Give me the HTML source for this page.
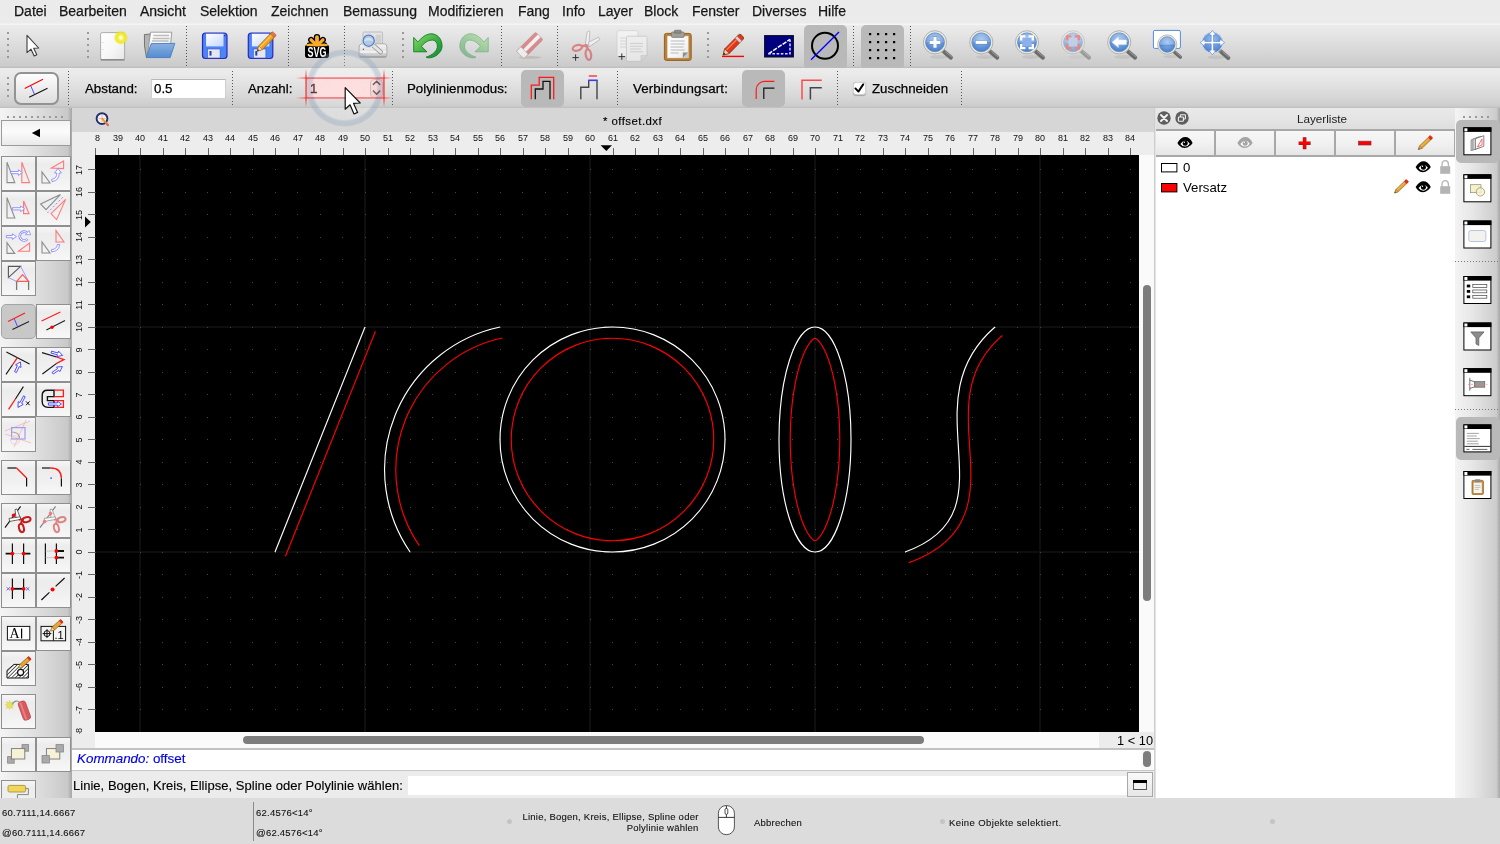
<!DOCTYPE html>
<html lang="de"><head><meta charset="utf-8"><title>offset.dxf</title>
<style>
*{box-sizing:border-box;margin:0;padding:0}
html,body{width:1500px;height:844px;overflow:hidden;background:#ececec;font-family:"Liberation Sans",sans-serif;color:#000}
body{position:relative}
div,span,svg{position:absolute}
span,svg{will-change:transform}
svg{overflow:visible}
#menubar{left:0;top:0;width:1500px;height:23px;background:#ebebeb;font-size:14px;line-height:22.4px;white-space:nowrap;color:#161616;-webkit-text-stroke:.25px #161616}
#menubar span{top:0}
#tb1{left:0;top:23px;width:1500px;height:45px;background:linear-gradient(#ececec 0,#f7f7f7 1.3px,#eaeaea 2.6px,#e6e6e6 10px,#d5d5d5 31px,#cbcbcb 43px,#bebebe 44.6px)}
#tb2{left:0;top:68px;width:1500px;height:40px;background:linear-gradient(#ededed 0,#e9e9e9 7px,#d9d9d9 27px,#cdcdcd 37.5px,#c1c1c1 39.6px);font-size:13.3px;white-space:nowrap;-webkit-text-stroke:.25px #000}
.sep{width:1px;background:repeating-linear-gradient(#555 0,#555 1px,transparent 1px,transparent 3px)}
.hdl{width:2px;background:repeating-linear-gradient(#999 0,#999 2px,transparent 2px,transparent 6px)}
.hdlh{height:2px;background:repeating-linear-gradient(90deg,#999 0,#999 2px,transparent 2px,transparent 6px)}
.pressed{background:#b9b9b9;border-radius:5px}
#left{left:0;top:108px;width:72px;height:691px;background:linear-gradient(90deg,#f4f4f4,#e4e4e4 40%,#c9c9c9 94%,#b0b0b0 98%,#a8a8a8);overflow:hidden}
.tb{width:35px;height:35px;border:1px solid #8f8f8f;background:linear-gradient(#f6f6f6,#ececec 22%,#f0f0f0 60%,#f7f7f7)}
.tb.on{background:#c8c8c8;border:1px solid #a5a5a5;border-radius:5px}
.tb svg{left:-1px;top:-1px;width:35px;height:35px}
#tabbar{left:72px;top:108px;width:1082px;height:24px;background:#d6d6d6;font-size:11.4px;letter-spacing:.46px;-webkit-text-stroke:.15px #000}
#hruler{left:95px;top:132px;width:1044px;height:23px;background:#ededed;overflow:hidden;font-size:9px}
#hrext{left:1139px;top:132px;width:15px;height:23px;background:#ededed}
#hruler span{top:1px;width:30px;margin-left:-15px;text-align:center;line-height:10px;color:#111}
#hruler i{position:absolute;top:16px;width:1px;height:7px;background:#666}
#vruler{left:72px;top:155px;width:23px;height:578.5px;background:#ededed;overflow:hidden;font-size:9px}
#vruler span{left:-8.4px;width:30px;height:10px;margin-top:-5px;text-align:center;line-height:10px;transform:rotate(-90deg);color:#111}
#vruler i{position:absolute;left:16px;width:7px;height:1px;background:#666}
#corner{left:72px;top:132px;width:23px;height:23px;background:#ededed}
#canvas{left:95px;top:155px;width:1044px;height:577px;background:#000;overflow:hidden}
#vscroll{left:1139px;top:155px;width:15px;height:577px;background:#fafafa}
#hscroll{left:95px;top:732px;width:1004px;height:16px;background:#fafafa}
#zoomlab{left:1099px;top:732px;width:55px;height:14.5px;background:#ececec;font-size:12.8px;line-height:17px;text-align:right;padding-right:1px}
#hist{left:72px;top:748px;width:1082px;height:23px;background:#fff;border-top:2px solid #c2c2c2;border-bottom:1px solid #c8c8c8;font-size:13.4px;color:#0000e0;line-height:17px;-webkit-text-stroke:.15px #0000e0}
#cmd{left:72px;top:771px;width:1082px;height:27px;background:#ececec;font-size:13px;letter-spacing:.03px;-webkit-text-stroke:.15px #000}
#status{left:0;top:798px;width:1500px;height:46px;background:#dcdcdc;font-size:9.5px;letter-spacing:.24px;white-space:nowrap;color:#111;-webkit-text-stroke:.1px #111}
#layers{left:1154px;top:108px;width:301px;height:691px;background:#fff}
#ltitle{left:0;top:0;width:301px;height:22px;background:linear-gradient(#eaeaea,#dedede);font-size:11.7px;text-align:center;line-height:22px;color:#222}
.lb{top:21px;width:61px;height:28px;border:2px solid #a8a8a8;border-left-width:1px;border-right-width:1px;background:linear-gradient(#f7f7f7,#f1f1f1 50%,#e6e6e6)}
#right{left:1454.5px;top:108px;width:45.5px;height:691px;background:linear-gradient(90deg,#f4f4f4,#e6e6e6 40%,#cccccc 92%,#b4b4b4 97%,#a8a8a8)}
.dot{width:5px;height:5px;border-radius:3px;background:#c4c4c4}
</style></head><body>
<div id="menubar"><span style="left:14.4px">Datei</span><span style="left:59.4px">Bearbeiten</span><span style="left:140.4px">Ansicht</span><span style="left:200.4px">Selektion</span><span style="left:271.4px">Zeichnen</span><span style="left:342.6px">Bemassung</span><span style="left:428.4px">Modifizieren</span><span style="left:518px">Fang</span><span style="left:561.6px">Info</span><span style="left:597.6px">Layer</span><span style="left:644.4px">Block</span><span style="left:691.8px">Fenster</span><span style="left:751.5px">Diverses</span><span style="left:818.4px">Hilfe</span></div>
<div id="tb1"></div>
<div class="hdl" style="left:7px;top:32px;height:26px"></div><div class="hdl" style="left:87px;top:32px;height:26px"></div><div class="hdl" style="left:402px;top:32px;height:26px"></div><div class="hdl" style="left:707px;top:32px;height:26px"></div><div class="sep" style="left:186px;top:26px;height:40px"></div><div class="sep" style="left:288px;top:26px;height:40px"></div><div class="sep" style="left:344px;top:26px;height:40px"></div><div class="sep" style="left:501px;top:26px;height:40px"></div><div class="sep" style="left:557px;top:26px;height:40px"></div><div class="sep" style="left:853px;top:26px;height:40px"></div><div class="sep" style="left:910px;top:26px;height:40px"></div><div class="pressed" style="left:804px;top:25px;width:43px;height:43px;border-radius:5px 5px 3px 3px"></div><div class="pressed" style="left:861px;top:25px;width:43px;height:43px;border-radius:5px 5px 3px 3px"></div>
<svg style="left:0;top:0;width:1500px;height:110px" viewBox="0 0 1500 110"><defs>
<radialGradient id="lens" cx=".5" cy=".35" r=".75"><stop offset="0" stop-color="#9cc0ee"/><stop offset=".6" stop-color="#5f92d6"/><stop offset="1" stop-color="#3f72be"/></radialGradient>
<radialGradient id="glow"><stop offset="0" stop-color="#ffffff"/><stop offset=".14" stop-color="#fffef0"/><stop offset=".36" stop-color="#f6f050"/><stop offset=".7" stop-color="#f0e81c" stop-opacity=".95"/><stop offset="1" stop-color="#ece400" stop-opacity="0"/></radialGradient>
<linearGradient id="paper" x1="0" y1="0" x2="1" y2="1"><stop offset="0" stop-color="#ffffff"/><stop offset=".6" stop-color="#f6f6f6"/><stop offset="1" stop-color="#e6e6e6"/></linearGradient>
<linearGradient id="fold" x1="0" y1="0" x2="0" y2="1"><stop offset="0" stop-color="#8ab2e2"/><stop offset="1" stop-color="#548cd0"/></linearGradient>
<linearGradient id="grn" x1="0" y1="0" x2="1" y2="1"><stop offset="0" stop-color="#8fdc6a"/><stop offset=".5" stop-color="#3fb040"/><stop offset="1" stop-color="#128a34"/></linearGradient>
<linearGradient id="lab" x1="0" y1="0" x2="1" y2="1"><stop offset="0" stop-color="#ffffff"/><stop offset="1" stop-color="#c4d6ff"/></linearGradient>
<linearGradient id="prn" x1="0" y1="0" x2="0" y2="1"><stop offset="0" stop-color="#f4f4f4"/><stop offset=".55" stop-color="#e2e2e2"/><stop offset="1" stop-color="#bababa"/></linearGradient>
<linearGradient id="btn" x1="0" y1="0" x2="0" y2="1"><stop offset="0" stop-color="#fbfbfb"/><stop offset=".5" stop-color="#ededed"/><stop offset="1" stop-color="#dcdcdc"/></linearGradient>
</defs><path d="M27,35.3 L27,52.6 L31,49.2 L34.2,56 L36.8,54.8 L33.7,48.3 L38.7,48 Z" fill="#fff" stroke="#3c3c3c" stroke-width="1.1" stroke-linejoin="round"/><rect x="100.6" y="32.6" width="24" height="27" rx="1.6" fill="url(#paper)" stroke="#a4a4a4" stroke-width=".9"/><path d="M100.6,59.9 h24" stroke="#7c7c7c" stroke-width="1.2"/><circle cx="103" cy="42.5" r=".5" fill="#bbb"/><circle cx="103" cy="49.5" r=".5" fill="#bbb"/><circle cx="120.9" cy="37.7" r="7.2" fill="url(#glow)"/><path d="M144.4,34.6 L150.4,34 L150.4,56 L146.4,57 Q143.6,46 144.4,34.6 Z" fill="#b4b4b4" stroke="#6a6a6a" stroke-width=".9" stroke-linejoin="round"/><path d="M150.6,32.2 L171.8,32.2 L170.6,44 L147.6,54 Z" fill="url(#paper)" stroke="#8a8a8a" stroke-width=".8" stroke-linejoin="round"/><path d="M153.4,35.6 H169 M152.6,38.4 H169.6 M152,41 H168.6" stroke="#bcbcbc" stroke-width="1.5"/><path d="M151.2,43.6 L174.8,43.4 L170.2,57.6 L146.2,57.6 Z" fill="url(#fold)" stroke="#4a7cc0" stroke-width=".9" stroke-linejoin="round"/><rect x="202.5" y="33" width="24.5" height="25.5" rx="3" fill="#4a84f6" stroke="#2a2ab6" stroke-width="1.2"/><rect x="206.1" y="33.8" width="17.4" height="12.6" fill="url(#lab)"/><rect x="207.5" y="49" width="12.6" height="9" fill="#e4e6f2" stroke="#3a52c8" stroke-width=".6"/><rect x="209.5" y="51" width="2" height="4.6" fill="#2a3cc4"/><rect x="224.1" y="35" width="1.2" height="1.2" fill="#2a2ab6"/><rect x="248.3" y="33" width="24.5" height="25.5" rx="3" fill="#4a84f6" stroke="#2a2ab6" stroke-width="1.2"/><rect x="251.9" y="33.8" width="17.4" height="12.6" fill="url(#lab)"/><rect x="253.3" y="49" width="12.6" height="9" fill="#e4e6f2" stroke="#3a52c8" stroke-width=".6"/><rect x="255.3" y="51" width="2" height="4.6" fill="#2a3cc4"/><rect x="269.90000000000003" y="35" width="1.2" height="1.2" fill="#2a2ab6"/><g transform="translate(257.2,51.2) rotate(-46)"><path d="M0,0 L5,-2.6 L24,-2.6 L24,2.6 L5,2.6 Z" fill="#f2a21e" stroke="#b0640a" stroke-width=".8" stroke-linejoin="round"/><path d="M5,-.8 L22,-.8" stroke="#ffd070" stroke-width="1.2"/><path d="M0,0 L5,-2.6 L5,2.6 Z" fill="#f4dcb0" stroke="#b0640a" stroke-width=".6"/><path d="M0,0 L2,-1 L2,1Z" fill="#333"/><rect x="21.5" y="-2.6" width="3.4" height="5.2" rx="1" fill="#e87060" stroke="#b0640a" stroke-width=".6"/></g><g><path d="M317,45.6 L317.0,37.2" stroke="#000" stroke-width="6.4" stroke-linecap="round"/><path d="M317,45.6 L311.1,39.9" stroke="#000" stroke-width="6.0" stroke-linecap="round"/><path d="M317,45.6 L322.9,39.9" stroke="#000" stroke-width="6.0" stroke-linecap="round"/><path d="M317,45.6 L309.4,44.8" stroke="#000" stroke-width="5.2" stroke-linecap="round"/><path d="M317,45.6 L324.6,44.8" stroke="#000" stroke-width="5.2" stroke-linecap="round"/><rect x="305" y="44.6" width="24" height="13.4" rx="2.8" fill="#000"/><path d="M317,45.6 L317.0,37.2" stroke="#fbab2c" stroke-width="3.8" stroke-linecap="round"/><path d="M317,45.6 L311.1,39.9" stroke="#fbab2c" stroke-width="3.4" stroke-linecap="round"/><path d="M317,45.6 L322.9,39.9" stroke="#fbab2c" stroke-width="3.4" stroke-linecap="round"/><path d="M317,45.6 L309.4,44.8" stroke="#fbab2c" stroke-width="2.6" stroke-linecap="round"/><path d="M317,45.6 L324.6,44.8" stroke="#fbab2c" stroke-width="2.6" stroke-linecap="round"/><path d="M307.4,45.2 H326.6" stroke="#fbab2c" stroke-width="2.2" stroke-linecap="round"/><rect x="306" y="46.4" width="22" height="11" rx="1.6" fill="#000"/><text x="317" y="57.2" font-family="Liberation Sans,sans-serif" font-weight="bold" font-size="14" fill="#fff" text-anchor="middle" textLength="19" lengthAdjust="spacingAndGlyphs">SVG</text></g><g><rect x="363" y="32" width="19.4" height="13" rx="1" fill="#e6e6e6" stroke="#b4b4b4" stroke-width=".9"/><rect x="375.6" y="34.6" width="5.4" height="8.8" fill="#d0d0d0"/><path d="M361.6,43.8 L384.4,43.8 Q386.9,44.4 386.9,47 L386.9,55.2 Q386.9,57.3 384.8,57.3 L361.2,57.3 Q359.1,57.3 359.1,55.2 L359.1,47 Q359.1,44.4 361.6,43.8 Z" fill="url(#prn)" stroke="#a6a6a6" stroke-width=".9"/><path d="M359.6,52 H386.4" stroke="#fff" stroke-width="1.1"/><path d="M360,56.8 H386" stroke="#9c9c9c" stroke-width="1"/><circle cx="363.4" cy="49.2" r=".7" fill="#555"/><path d="M372.6,44.8 L380.6,52" stroke="#9a9a9a" stroke-width="4.6" stroke-linecap="round"/><path d="M372.6,44.8 L380.6,52" stroke="#e6e6e6" stroke-width="3" stroke-linecap="round"/><circle cx="368.7" cy="40.7" r="6.9" fill="#f4f4f4" stroke="#c8c8c8" stroke-width=".6"/><circle cx="368.7" cy="40.7" r="5.6" fill="#b4c8e4" stroke="#4a80c8" stroke-width="1.3"/><path d="M364,41.6 A4.8,4.8 0 0 1 373.4,41.6 Q368.7,39.4 364,41.6Z" fill="#fff" opacity=".45"/></g><path d="M413.7,37.4 L413.7,51.8 L426.9,51.8 L421.5,46.4 C424,43 428,40 432.6,40.1 C435.5,40.3 437.2,42.5 437.4,46 C437.6,50.5 433,55 426,57.2 C429,58.5 433,57.8 437,55 C441,52 442.6,48 441.9,44 C441,38 437,34.2 432,33.8 C426,33.5 421.5,38 417.9,41.9 Z" fill="url(#grn)" stroke="#0d7a2c" stroke-width=".9" stroke-linejoin="round"/><g transform="translate(901.9,0) scale(-1,1)" opacity=".42"><path d="M413.7,37.4 L413.7,51.8 L426.9,51.8 L421.5,46.4 C424,43 428,40 432.6,40.1 C435.5,40.3 437.2,42.5 437.4,46 C437.6,50.5 433,55 426,57.2 C429,58.5 433,57.8 437,55 C441,52 442.6,48 441.9,44 C441,38 437,34.2 432,33.8 C426,33.5 421.5,38 417.9,41.9 Z" fill="url(#grn)" stroke="#0d7a2c" stroke-width=".9" stroke-linejoin="round"/></g><g opacity=".55"><ellipse cx="530" cy="57.4" rx="11.5" ry="1.4" fill="#b8a8a8"/><g transform="translate(529.9,45.2) rotate(-45)"><rect x="-13.8" y="-5.2" width="27" height="10.4" rx="1.6" fill="#d6484c" stroke="#9a3a3a" stroke-width=".7"/><rect x="-13.8" y="-1.8" width="27" height="3.6" fill="#fff"/><rect x="-13.8" y="-5.2" width="6.2" height="10.4" rx="1.2" fill="#fff" stroke="#a0a0a0" stroke-width=".7"/></g></g><g opacity=".6"><path d="M585.2,45.6 L587.2,31.8 Q588.6,30.6 589.8,31.4 L588.9,46.4 Z" fill="#fafafa" stroke="#8a8a8a" stroke-width=".7"/><path d="M588.4,42.4 L598.6,37.2 L599.7,39.6 L589.2,46.8 Z" fill="#fafafa" stroke="#8a8a8a" stroke-width=".7"/><ellipse cx="577.3" cy="47.9" rx="4.7" ry="2.7" transform="rotate(-17 577.3 47.9)" fill="none" stroke="#d8484c" stroke-width="2.2"/><ellipse cx="588.4" cy="54.6" rx="2.7" ry="5.3" transform="rotate(-9 588.4 54.6)" fill="none" stroke="#d8484c" stroke-width="2.2"/><path d="M581.6,46.2 L586.6,45.4 L587.6,49.6" stroke="#d8484c" stroke-width="2.6" fill="none" stroke-linejoin="round"/></g><path d="M572.4,57.6 h6.4 M575.6,54.4 v6.4" stroke="#333" stroke-width="1"/><g opacity=".6"><rect x="617" y="30.6" width="21" height="26" rx="1.4" fill="#fafafa" stroke="#c4c4c4" stroke-width=".8"/><path d="M620,38 h8 M620,41 h8 M620,44 h6 M620,47 h6" stroke="#d0d0d0" stroke-width="1"/><path d="M626.4,37.6 Q626.4,36.2 627.8,36.2 L645.6,36.2 Q647,36.2 647,37.6 L647,55.4 L641,61.4 L627.8,61.4 Q626.4,61.4 626.4,60 Z" fill="#f6f6f6" stroke="#b4b4b4" stroke-width=".8"/><path d="M647,55.4 L641,55.4 L641,61.4 Z" fill="#d8d8d8" stroke="#b4b4b4" stroke-width=".6"/><path d="M630,43.4 h13 M630,46.2 h13 M630,49 h11 M630,51.8 h13" stroke="#c2c2c2" stroke-width="1"/></g><path d="M618.6,56.6 h6.4 M621.8,53.4 v6.4" stroke="#333" stroke-width="1"/><g><rect x="664.4" y="33.4" width="26.8" height="27" rx="2" fill="#bb7f36" stroke="#96601e" stroke-width="1"/><rect x="667.2" y="36" width="21.2" height="22" fill="url(#paper)" stroke="#c8c0b0" stroke-width=".5"/><path d="M670.6,41 h14 M670.6,44 h14 M670.6,47 h13 M670.6,50 h14 M670.6,53 h8" stroke="#b8b8b8" stroke-width="1"/><path d="M688.4,52.6 L682.8,52.6 L682.8,58 Z" fill="#909090"/><path d="M688.4,52.6 L688.4,58 L682.8,58 Z" fill="#c8c8c8"/><rect x="671.4" y="32" width="12.8" height="5.4" rx="1.2" fill="#a0a098" stroke="#74746c" stroke-width=".7"/><rect x="674.4" y="30.2" width="6.8" height="3" rx=".8" fill="#8c8c84" stroke="#686860" stroke-width=".6"/></g><path d="M722,56.4 H744" stroke="#ff0000" stroke-width="1.4"/><g transform="translate(723.2,55) rotate(-45.5)"><path d="M0,0 L5.4,-3.2 L25,-3.2 Q27,-3.2 27,-1.2 L27,1.2 Q27,3.2 25,3.2 L5.4,3.2 Z" fill="#e23420" stroke="#7a3a10" stroke-width=".8" stroke-linejoin="round"/><path d="M6,-1.2 L20,-1.2" stroke="#ff7a5a" stroke-width="1.4"/><path d="M0,0 L5.4,-3.2 L5.4,3.2 Z" fill="#f0d4a4" stroke="#7a3a10" stroke-width=".6"/><path d="M0,0 L2.2,-1.3 L2.2,1.3Z" fill="#222"/><rect x="20.4" y="-3.2" width="2.6" height="6.4" fill="#d8d0d0"/></g><rect x="764.6" y="35.6" width="28.8" height="21.4" fill="#00007e" stroke="#0a0a20" stroke-width="1"/><path d="M768.4,53.8 L790,39.4" stroke="#fff" stroke-width="1.5" stroke-dasharray="4.5,1.2"/><path d="M790,39.4 L790,53.8 L768.4,53.8" stroke="#d8d8ff" stroke-width="1.5" stroke-dasharray="2.6,1.6" fill="none"/><circle cx="825" cy="45.8" r="13" fill="none" stroke="#000" stroke-width="2"/><path d="M811,59.8 L839,32" stroke="#0000ff" stroke-width="1.3"/><rect x="869" y="33" width="2.2" height="2.2" fill="#000"/><rect x="869" y="41" width="2.2" height="2.2" fill="#000"/><rect x="869" y="49" width="2.2" height="2.2" fill="#000"/><rect x="869" y="57" width="2.2" height="2.2" fill="#000"/><rect x="877" y="33" width="2.2" height="2.2" fill="#000"/><rect x="877" y="41" width="2.2" height="2.2" fill="#000"/><rect x="877" y="49" width="2.2" height="2.2" fill="#000"/><rect x="877" y="57" width="2.2" height="2.2" fill="#000"/><rect x="885" y="33" width="2.2" height="2.2" fill="#000"/><rect x="885" y="41" width="2.2" height="2.2" fill="#000"/><rect x="885" y="49" width="2.2" height="2.2" fill="#000"/><rect x="885" y="57" width="2.2" height="2.2" fill="#000"/><rect x="893" y="33" width="2.2" height="2.2" fill="#000"/><rect x="893" y="41" width="2.2" height="2.2" fill="#000"/><rect x="893" y="49" width="2.2" height="2.2" fill="#000"/><rect x="893" y="57" width="2.2" height="2.2" fill="#000"/><g opacity="1.0"><ellipse cx="939" cy="56.9" rx="9" ry="2" fill="#000" opacity=".07"/><path d="M942.4,50.3 L950.8,57.5" stroke="#8e8e8a" stroke-width="4.4" stroke-linecap="round"/><path d="M944.6,52.199999999999996 L950.8,57.5" stroke="#6a6a6a" stroke-width="3.6" stroke-linecap="round"/><path d="M945.4,51.699999999999996 L951.4,56.699999999999996" stroke="#a4a4a4" stroke-width=".9" stroke-linecap="round"/><circle cx="935" cy="42.3" r="11.6" fill="#eaeae2" stroke="#a4a49c" stroke-width=".8"/><circle cx="935" cy="42.3" r="9.4" fill="url(#lens)" stroke="#5b86c4" stroke-width=".8"/><path d="M926,42.3 A9,9 0 0 1 944,42.3 Z" fill="#fff" opacity=".2"/><path d="M929.2,42.3 h11.6 M935,36.5 v11.6" stroke="#5b86c4" stroke-width="4.2"/><path d="M929.6,42.3 h10.8 M935,36.9 v10.8" stroke="#fff" stroke-width="3.2"/></g><g opacity="1.0"><ellipse cx="985.3" cy="56.9" rx="9" ry="2" fill="#000" opacity=".07"/><path d="M988.6999999999999,50.3 L997.0999999999999,57.5" stroke="#8e8e8a" stroke-width="4.4" stroke-linecap="round"/><path d="M990.9,52.199999999999996 L997.0999999999999,57.5" stroke="#6a6a6a" stroke-width="3.6" stroke-linecap="round"/><path d="M991.6999999999999,51.699999999999996 L997.6999999999999,56.699999999999996" stroke="#a4a4a4" stroke-width=".9" stroke-linecap="round"/><circle cx="981.3" cy="42.3" r="11.6" fill="#eaeae2" stroke="#a4a49c" stroke-width=".8"/><circle cx="981.3" cy="42.3" r="9.4" fill="url(#lens)" stroke="#5b86c4" stroke-width=".8"/><path d="M972.3,42.3 A9,9 0 0 1 990.3,42.3 Z" fill="#fff" opacity=".2"/><path d="M975.2,42.3 h12.2" stroke="#5b86c4" stroke-width="4.2"/><path d="M975.6,42.3 h11.4" stroke="#fff" stroke-width="3.2"/></g><g opacity="1.0"><ellipse cx="1031" cy="56.9" rx="9" ry="2" fill="#000" opacity=".07"/><path d="M1034.4,50.3 L1042.8,57.5" stroke="#8e8e8a" stroke-width="4.4" stroke-linecap="round"/><path d="M1036.6,52.199999999999996 L1042.8,57.5" stroke="#6a6a6a" stroke-width="3.6" stroke-linecap="round"/><path d="M1037.4,51.699999999999996 L1043.4,56.699999999999996" stroke="#a4a4a4" stroke-width=".9" stroke-linecap="round"/><circle cx="1027" cy="42.3" r="11.6" fill="#eaeae2" stroke="#a4a49c" stroke-width=".8"/><circle cx="1027" cy="42.3" r="9.4" fill="url(#lens)" stroke="#5b86c4" stroke-width=".8"/><path d="M1018,42.3 A9,9 0 0 1 1036,42.3 Z" fill="#fff" opacity=".2"/><rect x="1022.6" y="38" width="8.8" height="8.4" fill="#8cb0ea"/><path d="M1021.2,40.6 v-4.2 h4.2 M1028.6,36.4 h4.2 v4.2 M1032.8,44 v4.2 h-4.2 M1025.4,48.2 h-4.2 v-4.2" stroke="#fff" stroke-width="2.3" fill="none"/></g><g opacity="0.55"><ellipse cx="1077" cy="56.9" rx="9" ry="2" fill="#000" opacity=".07"/><path d="M1080.4,50.3 L1088.8,57.5" stroke="#8e8e8a" stroke-width="4.4" stroke-linecap="round"/><path d="M1082.6,52.199999999999996 L1088.8,57.5" stroke="#6a6a6a" stroke-width="3.6" stroke-linecap="round"/><path d="M1083.4,51.699999999999996 L1089.4,56.699999999999996" stroke="#a4a4a4" stroke-width=".9" stroke-linecap="round"/><circle cx="1073" cy="42.3" r="11.6" fill="#eaeae2" stroke="#a4a49c" stroke-width=".8"/><circle cx="1073" cy="42.3" r="9.4" fill="url(#lens)" stroke="#5b86c4" stroke-width=".8"/><path d="M1064,42.3 A9,9 0 0 1 1082,42.3 Z" fill="#fff" opacity=".2"/><rect x="1068.6" y="38" width="8.8" height="8.4" fill="#a8c4ee"/><path d="M1067.2,40.6 v-4.2 h4.2 M1074.6,36.4 h4.2 v4.2 M1078.8,44 v4.2 h-4.2 M1071.4,48.2 h-4.2 v-4.2" stroke="#f04040" stroke-width="2.4" fill="none"/></g><g opacity="1.0"><ellipse cx="1123.2" cy="56.9" rx="9" ry="2" fill="#000" opacity=".07"/><path d="M1126.6000000000001,50.3 L1135.0,57.5" stroke="#8e8e8a" stroke-width="4.4" stroke-linecap="round"/><path d="M1128.8,52.199999999999996 L1135.0,57.5" stroke="#6a6a6a" stroke-width="3.6" stroke-linecap="round"/><path d="M1129.6000000000001,51.699999999999996 L1135.6000000000001,56.699999999999996" stroke="#a4a4a4" stroke-width=".9" stroke-linecap="round"/><circle cx="1119.2" cy="42.3" r="11.6" fill="#eaeae2" stroke="#a4a49c" stroke-width=".8"/><circle cx="1119.2" cy="42.3" r="9.4" fill="url(#lens)" stroke="#5b86c4" stroke-width=".8"/><path d="M1110.2,42.3 A9,9 0 0 1 1128.2,42.3 Z" fill="#fff" opacity=".2"/><path d="M1112,42.3 L1118.4,37 L1118.4,40 L1126.4,40 L1126.4,44.6 L1118.4,44.6 L1118.4,47.6 Z" fill="#fff" stroke="#dfe8f6" stroke-width=".5"/></g><rect x="1153.4" y="30.4" width="27" height="18" rx="1.4" fill="#fff" stroke="#5a8ad0" stroke-width="1"/><g transform="translate(1167.2,44.5) scale(.83) translate(-1167.2,-44.5)"><g opacity="1.0"><ellipse cx="1171.2" cy="59.1" rx="9" ry="2" fill="#000" opacity=".07"/><path d="M1174.6000000000001,52.5 L1183.0,59.7" stroke="#8e8e8a" stroke-width="4.4" stroke-linecap="round"/><path d="M1176.8,54.4 L1183.0,59.7" stroke="#6a6a6a" stroke-width="3.6" stroke-linecap="round"/><path d="M1177.6000000000001,53.9 L1183.6000000000001,58.9" stroke="#a4a4a4" stroke-width=".9" stroke-linecap="round"/><circle cx="1167.2" cy="44.5" r="11.6" fill="#eaeae2" stroke="#a4a49c" stroke-width=".8"/><circle cx="1167.2" cy="44.5" r="9.4" fill="url(#lens)" stroke="#5b86c4" stroke-width=".8"/><path d="M1158.2,44.5 A9,9 0 0 1 1176.2,44.5 Z" fill="#fff" opacity=".2"/><path d="M1158.4,46 H1176" stroke="#3f72be" stroke-width="1" opacity=".5"/></g></g><g opacity="1.0"><ellipse cx="1216.4" cy="57.2" rx="9" ry="2" fill="#000" opacity=".07"/><path d="M1219.8000000000002,50.6 L1228.2,57.8" stroke="#8e8e8a" stroke-width="4.4" stroke-linecap="round"/><path d="M1222.0,52.5 L1228.2,57.8" stroke="#6a6a6a" stroke-width="3.6" stroke-linecap="round"/><path d="M1222.8000000000002,52.0 L1228.8000000000002,57.0" stroke="#a4a4a4" stroke-width=".9" stroke-linecap="round"/></g><circle cx="1212.4" cy="42.6" r="10.4" fill="url(#lens)" stroke="#c8d4e4" stroke-width="1"/><path d="M1212.4,30.4 L1216,35 L1213.6,35 L1213.6,41.4 L1220,41.4 L1220,39 L1224.6,42.6 L1220,46.2 L1220,43.8 L1213.6,43.8 L1213.6,50.2 L1216,50.2 L1212.4,54.8 L1208.8,50.2 L1211.2,50.2 L1211.2,43.8 L1204.8,43.8 L1204.8,46.2 L1200.2,42.6 L1204.8,39 L1204.8,41.4 L1211.2,41.4 L1211.2,35 L1208.8,35 Z" fill="#fff" stroke="#5b8ad0" stroke-width=".7"/></svg>
<div id="tb2"><div class="hdl" style="left:7px;top:9px;height:20px"></div><div class="sep" style="left:68px;top:3px;height:35px"></div><div class="sep" style="left:232px;top:3px;height:35px"></div><div class="sep" style="left:392px;top:3px;height:35px"></div><div class="sep" style="left:617px;top:3px;height:35px"></div><div class="sep" style="left:837px;top:3px;height:35px"></div><div class="sep" style="left:961px;top:3px;height:35px"></div><div style="left:14px;top:4px;width:45px;height:33px;border:2px solid #939393;border-radius:7px;background:linear-gradient(#fdfdfd,#ececec 55%,#dedede)"></div><span style="left:84.5px;top:13.2px;line-height:16px">Abstand:</span><div style="left:151px;top:10.5px;width:75px;height:20px;background:#fff;border:1px solid #cfcfcf;border-top-color:#b8b8b8;font-size:13.3px;line-height:18px"><span style="left:2px;top:0">0.5</span></div><span style="left:248px;top:13.2px;line-height:16px">Anzahl:</span><div style="left:306px;top:10px;width:78px;height:20px;background:#fff;border:1px solid #cfcfcf;border-radius:3px;font-size:13.3px;line-height:18px;color:#222"><span style="left:2.6px;top:.6px;color:#000;-webkit-text-stroke:.45px #000">1</span></div><div style="left:370px;top:10.5px;width:13px;height:19px;background:linear-gradient(#ffffff,#ececec);border:1px solid #c8c8c8;border-radius:4px"></div><span style="left:407px;top:13.2px;line-height:16px">Polylinienmodus:</span><div class="pressed" style="left:521px;top:2px;width:43px;height:37px"></div><span style="left:633px;top:13.2px;line-height:16px;letter-spacing:.12px">Verbindungsart:</span><div class="pressed" style="left:742px;top:2px;width:43px;height:37px"></div><div style="left:853px;top:14px;width:12.5px;height:12.5px;background:#fff;border:1px solid #d2d2d2;border-radius:3px;box-shadow:0 .5px 1px rgba(0,0,0,.25)"></div><span style="left:871.5px;top:13.2px;line-height:16px">Zuschneiden</span><svg style="left:0;top:0;width:1000px;height:40px" viewBox="0 68 1000 40"><path d="M24.7,88.5 L43,79.3" stroke="#ff0000" stroke-width="1.1"/><path d="M29.2,97.3 L47.5,88.2" stroke="#111" stroke-width="1.1"/><path d="M30.8,86 L34.5,94.3" stroke="#4a4aff" stroke-width="1"/><path d="M373.4,84.4 l3.2,-3.2 l3.2,3.2 M373.4,91 l3.2,3.2 l3.2,-3.2" stroke="#333" stroke-width="1.5" fill="none" stroke-linecap="round" stroke-linejoin="round"/><path d="M531.3,99.3 V85.2 H539.2 V77.3 H553.7 V99.3" stroke="#ff1a1a" stroke-width="1.3" fill="none"/><path d="M535.3,99.3 V89 H543 V81.3 H550 V99.3" stroke="#111" stroke-width="1.3" fill="none"/><path d="M580.8,99.3 V87.3 H588.7 V80.2 M597,80.2 V99.3" stroke="#444" stroke-width="1.4" fill="none"/><path d="M588.2,80.3 H597.6" stroke="#3a3aff" stroke-width="1.6"/><path d="M588.8,76 H597" stroke="#ff4a4a" stroke-width="1.6"/><path d="M756.2,99 V89.6 A8.2,8.2 0 0 1 764.4,81.4 H774.4" stroke="#ff1a1a" stroke-width="1.2" fill="none"/><path d="M763.8,99 V88.2 H774.4" stroke="#111" stroke-width="1.2" fill="none"/><path d="M802,99.4 V80.2 H821.8" stroke="#ff4a4a" stroke-width="1.5" fill="none"/><path d="M810.4,99.4 V87.8 H821.8" stroke="#444" stroke-width="1.5" fill="none"/><path d="M855.4,88.4 L858.4,91.6 L863.2,84.4" stroke="#000" stroke-width="1.9" fill="none" stroke-linecap="round" stroke-linejoin="round"/></svg></div>
<div id="left"><div class="hdlh" style="left:7px;top:8.4px;width:58px"></div><div style="left:1px;top:12px;width:70px;height:26px;border:1px solid #9b9b9b;background:linear-gradient(#f2f2f2,#fbfbfb 45%,#e9e9e9)"></div><svg style="left:0;top:0;width:72px;height:40px" viewBox="0 108 72 40"><path d="M31.8,133 L40,128.8 L40,137.2 Z" fill="#000"/></svg><div class="tb" style="left:1px;top:48px"><svg viewBox="0 0 35 35"><path d="M6,6.2 V26.6 H13.8 Z" fill="none" stroke="#8c8c8c" stroke-width="1.1"/><path d="M20.8,6.2 V26.6 H28.6 Z" fill="none" stroke="#ff7a7a" stroke-width="1.1"/><path d="M9.8,15.500000000000002 H17.4 V13.8 L21.4,16.6 L17.4,19.400000000000002 V17.700000000000003 H9.8 Z" fill="#fff" stroke="#8a8aff" stroke-width=".9" stroke-linejoin="round"/></svg></div><div class="tb" style="left:36px;top:48px"><svg viewBox="0 0 35 35"><path d="M6,16 V27 H14 Z" fill="none" stroke="#8c8c8c" stroke-width="1.1"/><path d="M15.4,12 L27.6,5 V12.6 Z" fill="none" stroke="#ff7a7a" stroke-width="1.1"/><path d="M16,25.6 Q23.4,24.6 23.2,17 L25.4,17 L22,12.4 L18.6,17 L20.8,17 Q21,22.6 15.6,23.4 Z" fill="#fff" stroke="#8a8aff" stroke-width=".9" stroke-linejoin="round"/></svg></div><div class="tb" style="left:1px;top:83px"><svg viewBox="0 0 35 35"><path d="M6,6.6 V27 H13.8 Z" fill="none" stroke="#8c8c8c" stroke-width="1.1"/><path d="M22.6,10 V22.6 H28 Z" fill="none" stroke="#ff7a7a" stroke-width="1.2"/><path d="M11.4,16.7 H19.6 V15.0 L23.6,17.8 L19.6,20.6 V18.900000000000002 H11.4 Z" fill="#fff" stroke="#8a8aff" stroke-width=".9" stroke-linejoin="round"/></svg></div><div class="tb" style="left:36px;top:83px"><svg viewBox="0 0 35 35"><path d="M4.6,13 L24.4,3.6 L10,18.6 Z" fill="none" stroke="#8c8c8c" stroke-width="1.1"/><path d="M15,22.6 L29.6,8.4 L20.6,28.6 Z" fill="none" stroke="#ff7a7a" stroke-width="1.1"/><path d="M11.4,22 L27.6,5.4" stroke="#8a8aff" stroke-width="1" stroke-dasharray="2,2"/></svg></div><div class="tb" style="left:1px;top:118px"><svg viewBox="0 0 35 35"><path d="M6,16.6 V27.4 H13.8 Z" fill="none" stroke="#8c8c8c" stroke-width="1.1"/><path d="M17.4,25.2 L28.6,17 V25.2 Z" fill="none" stroke="#ff7a7a" stroke-width="1.1"/><path d="M5.4,9.5 H11.4 V7.8 L15.4,10.6 L11.4,13.399999999999999 V11.7 H5.4 Z" fill="#fff" stroke="#8a8aff" stroke-width=".9" stroke-linejoin="round"/><path d="M27,8 A4.4,4.4 0 1 0 26.4,13" fill="none" stroke="#8a8aff" stroke-width="2.6"/><path d="M27,8 A4.4,4.4 0 1 0 26.4,13" fill="none" stroke="#fff" stroke-width="1"/><path d="M24.4,8.6 L29.6,8.8 L28,4.6 Z" fill="#fff" stroke="#8a8aff" stroke-width=".8"/></svg></div><div class="tb" style="left:36px;top:118px"><svg viewBox="0 0 35 35"><path d="M6,16 V27 H14 Z" fill="none" stroke="#8c8c8c" stroke-width="1.1"/><path d="M20,4.6 V16 H28 Z" fill="none" stroke="#ff7a7a" stroke-width="1.1"/><path d="M15.6,25.8 Q23,25.4 23.6,18.6 L21.4,18.4 Q21,23.4 15.4,23.6 Z" fill="#fff" stroke="#8a8aff" stroke-width=".9" stroke-linejoin="round"/></svg></div><div class="tb" style="left:1px;top:153px"><svg viewBox="0 0 35 35"><path d="M7.4,5.4 H19.6 L7.4,16.6 Z" fill="none" stroke="#555" stroke-width="1.1"/><path d="M19.6,5.4 L27.6,20.4 M7.4,16.6 L15.6,20.4" stroke="#8a8aff" stroke-width=".8"/><path d="M15.6,20.4 L21.6,13.6 L27.6,20.4 Z" fill="none" stroke="#ff5a5a" stroke-width="1.2"/><path d="M15.6,29 V20.8 M27.6,20.8 V29" stroke="#777" stroke-width="1.3"/></svg></div><div class="tb on" style="left:1px;top:196px"><svg viewBox="0 0 35 35"><path d="M7,17.4 L24,9" stroke="#ff1a1a" stroke-width="1.1"/><path d="M11.4,25.6 L28,17.4" stroke="#222" stroke-width="1.1"/><path d="M13.2,14.6 L16.6,22.8" stroke="#4a4aff" stroke-width="1"/></svg></div><div class="tb" style="left:36px;top:196px"><svg viewBox="0 0 35 35"><path d="M5.6,17 L24.4,8" stroke="#ff1a1a" stroke-width="1.1"/><path d="M10.4,26 L29,16.6" stroke="#222" stroke-width="1.1"/><circle cx="16" cy="23.2" r="1.7" fill="#ff0000"/></svg></div><div class="tb" style="left:1px;top:239px"><svg viewBox="0 0 35 35"><path d="M5.4,5 L28.6,17" stroke="#111" stroke-width="1.1"/><path d="M16.4,10.6 L11.4,18" stroke="#ff1a1a" stroke-width="1.3"/><path d="M11.4,18 L5,27.4" stroke="#111" stroke-width="1.1"/><path d="M13.6,24.6 L16.4,18.6 L14.6,17.8 L19.4,15 L20,20.4 L18.2,19.6 L15.4,25.6 Z" fill="#fff" stroke="#3a3aff" stroke-width=".9" stroke-linejoin="round"/></svg></div><div class="tb" style="left:36px;top:239px"><svg viewBox="0 0 35 35"><path d="M6,5.6 L20.6,10" stroke="#111" stroke-width="1.1"/><path d="M20.6,10 L28,12.6 L20.6,16.4" stroke="#ff1a1a" stroke-width="1.3" fill="none"/><path d="M20.6,16.4 L6.4,27" stroke="#111" stroke-width="1.1"/><path d="M15.6,4.2 L22,6 L22.6,4.2 L26.6,8.4 L20.8,9.6 L21.4,7.8 L15,6 Z" fill="#fff" stroke="#3a3aff" stroke-width=".9" stroke-linejoin="round"/><path d="M16,25.4 L21.6,21.6 L20.6,20 L26.4,19.6 L23.8,24.6 L22.8,23.2 L17.2,27 Z" fill="#fff" stroke="#3a3aff" stroke-width=".9" stroke-linejoin="round"/></svg></div><div class="tb" style="left:1px;top:274px"><svg viewBox="0 0 35 35"><path d="M22.4,4.6 L14.4,17" stroke="#111" stroke-width="1.1"/><path d="M14.4,17 L7.6,27.4" stroke="#ff1a1a" stroke-width="1.3"/><path d="M22.6,13.8 L19,20.6 L17.2,19.6 L17,25.4 L22.2,22.4 L20.6,21.4 L24.2,14.8 Z" fill="#fff" stroke="#3a3aff" stroke-width=".9" stroke-linejoin="round"/><path d="M25,19.4 l3.6,3.8 M28.6,19.4 l-3.6,3.8" stroke="#111" stroke-width="1"/></svg></div><div class="tb" style="left:36px;top:274px"><svg viewBox="0 0 35 35"><path d="M18,8.2 H11.4 Q6.2,8.2 6.2,13.4 V19.6 Q6.2,25.4 12,25.4 H18 V18.6 H11.4 V14.6 H18 Z" fill="none" stroke="#111" stroke-width="1.4"/><path d="M18,8.2 H27.4 V14.6 H18 M18,18.6 H27.4 V25.4 H18" fill="none" stroke="#ff1a1a" stroke-width="1.3"/><path d="M12.4,20.9 H21.4 V19.2 L25.4,22 L21.4,24.8 V23.1 H12.4 Z" fill="#fff" stroke="#3a3aff" stroke-width=".9" stroke-linejoin="round"/></svg></div><div class="tb" style="left:1px;top:309px"><svg viewBox="0 0 35 35"><g opacity=".45"><path d="M4,14 L29,4 M4,17 L30,26 M13,30 L25,3" stroke="#ff6a6a" stroke-width=".8"/><rect x="10.6" y="10.6" width="13.4" height="11.4" fill="none" stroke="#3a3aff" stroke-width="1.2"/><path d="M10.6,15 Q18.6,15 18.6,22" fill="none" stroke="#555" stroke-width="1.1"/><circle cx="14" cy="23" r="4.4" fill="none" stroke="#ff8a8a" stroke-width=".7"/></g></svg></div><div class="tb" style="left:1px;top:352px"><svg viewBox="0 0 35 35"><path d="M6.4,8 H15.6" stroke="#111" stroke-width="1.2"/><path d="M15.6,8 L25.6,18" stroke="#ff1a1a" stroke-width="1.3"/><path d="M25.6,18 V26.4" stroke="#111" stroke-width="1.2"/></svg></div><div class="tb" style="left:36px;top:352px"><svg viewBox="0 0 35 35"><path d="M6,8 H14.6" stroke="#111" stroke-width="1.2"/><path d="M14.6,8 Q25.4,8 25.4,18.6" stroke="#ff1a1a" stroke-width="1.3" fill="none"/><path d="M25.4,18.6 V26.4" stroke="#111" stroke-width="1.2"/><rect x="14.4" y="17.4" width="1.4" height="1.4" fill="#2a2aff"/></svg></div><div class="tb" style="left:1px;top:395px"><svg viewBox="0 0 35 35"><g opacity="1"><path d="M19.6,3.4 L4,24.6" stroke="#111" stroke-width="1.1"/><path d="M14,6.6 L16,6 L19.4,15.4 L15.2,16.8 Z" fill="#fff" stroke="#444" stroke-width=".8"/><path d="M8,15.4 L19.4,13.8 L19.6,16.4 L8.8,18.4 Z" fill="#fff" stroke="#444" stroke-width=".8"/><ellipse cx="25.6" cy="16.6" rx="4" ry="2.4" transform="rotate(-12 25.6 16.6)" fill="none" stroke="#c81a1a" stroke-width="2"/><ellipse cx="20.4" cy="25" rx="2.4" ry="4.2" transform="rotate(-14 20.4 25)" fill="none" stroke="#c81a1a" stroke-width="2"/><path d="M18,17 L21.4,16 L19.8,20.6" stroke="#c81a1a" stroke-width="1.8" fill="none"/><circle cx="12.6" cy="12.4" r="1.8" fill="#ff0000"/></g></svg></div><div class="tb" style="left:36px;top:395px"><svg viewBox="0 0 35 35"><g opacity="0.5"><path d="M19.6,3.4 L4,24.6" stroke="#111" stroke-width="1.1"/><path d="M14,6.6 L16,6 L19.4,15.4 L15.2,16.8 Z" fill="#fff" stroke="#444" stroke-width=".8"/><path d="M8,15.4 L19.4,13.8 L19.6,16.4 L8.8,18.4 Z" fill="#fff" stroke="#444" stroke-width=".8"/><ellipse cx="25.6" cy="16.6" rx="4" ry="2.4" transform="rotate(-12 25.6 16.6)" fill="none" stroke="#c81a1a" stroke-width="2"/><ellipse cx="20.4" cy="25" rx="2.4" ry="4.2" transform="rotate(-14 20.4 25)" fill="none" stroke="#c81a1a" stroke-width="2"/><path d="M18,17 L21.4,16 L19.8,20.6" stroke="#c81a1a" stroke-width="1.8" fill="none"/><circle cx="14.6" cy="10.6" r="1.8" fill="#ff0000"/><circle cx="8.6" cy="18.6" r="1.8" fill="#ff0000"/></g></svg></div><div class="tb" style="left:1px;top:430px"><svg viewBox="0 0 35 35"><path d="M11.4,5.4 V26 M22.6,5.4 V26" stroke="#111" stroke-width="1.2"/><path d="M4.6,15.6 H11.4 M22.6,15.6 H29.4" stroke="#111" stroke-width="1.6"/><path d="M11.4,15.6 H22.6" stroke="#aaa" stroke-width=".7"/><circle cx="11.4" cy="15.6" r="1.9" fill="#ff0000"/><circle cx="22.6" cy="15.6" r="1.9" fill="#ff0000"/></svg></div><div class="tb" style="left:36px;top:430px"><svg viewBox="0 0 35 35"><path d="M9.4,5.6 V26 M20.4,5.6 V26" stroke="#111" stroke-width="1.2"/><path d="M20.4,13 H28 M20.4,19.6 H28" stroke="#111" stroke-width="1.8"/><path d="M9.4,13 H20.4 M9.4,19.6 H20.4" stroke="#888" stroke-width=".7" stroke-dasharray="1,1"/><circle cx="20.4" cy="13" r="1.9" fill="#ff0000"/><circle cx="20.4" cy="19.6" r="1.9" fill="#ff0000"/></svg></div><div class="tb" style="left:1px;top:465px"><svg viewBox="0 0 35 35"><path d="M11.4,5.6 V26 M22.6,5.6 V26" stroke="#111" stroke-width="1.2"/><path d="M11.4,15.8 H22.6" stroke="#111" stroke-width="1.8"/><path d="M5.6,14.2 l3.4,3.2 M9,14.2 l-3.4,3.2 M25,14.2 l3.4,3.2 M28.4,14.2 l-3.4,3.2" stroke="#4a4aff" stroke-width=".8"/><circle cx="11.4" cy="15.8" r="1.9" fill="#ff0000"/><circle cx="22.6" cy="15.8" r="1.9" fill="#ff0000"/></svg></div><div class="tb" style="left:36px;top:465px"><svg viewBox="0 0 35 35"><path d="M5.4,27 L13.4,19.4 M19.6,13.4 L28.6,5" stroke="#111" stroke-width="1.2"/><circle cx="16.6" cy="16.4" r="2" fill="#ff0000"/></svg></div><div class="tb" style="left:1px;top:508px"><svg viewBox="0 0 35 35"><rect x="6.4" y="10.4" width="22.4" height="13.6" fill="#fff" stroke="#111" stroke-width="1"/><text x="8.4" y="22" style="font-family:Liberation Serif,serif" font-size="14" fill="#000">A</text><path d="M20.6,12.4 V22.4" stroke="#000" stroke-width="1.2"/></svg></div><div class="tb" style="left:36px;top:508px"><svg viewBox="0 0 35 35"><rect x="5" y="10.4" width="24.6" height="14.4" fill="#f4f4f4" stroke="#111" stroke-width="1"/><path d="M17.4,10.4 V24.8" stroke="#111" stroke-width="1"/><circle cx="11" cy="17.6" r="3" fill="none" stroke="#111" stroke-width="1"/><path d="M6.6,17.6 h8.8 M11,13.2 v8.8" stroke="#111" stroke-width="1"/><text x="18.4" y="23" font-family="Liberation Sans,sans-serif" font-size="11" fill="#000">.1</text><g transform="translate(14.6,15) rotate(-42)"><path d="M0,0 L3.6,-1.9 L15,-1.9 L15,1.9 L3.6,1.9 Z" fill="#e8a23a" stroke="#8a5a10" stroke-width=".6"/><path d="M0,0 L3.6,-1.9 L3.6,1.9Z" fill="#f0dcb0" stroke="#8a5a10" stroke-width=".4"/><rect x="13" y="-1.9" width="2.6" height="3.8" rx=".8" fill="#e02a1a"/></g></svg></div><div class="tb" style="left:1px;top:543px"><svg viewBox="0 0 35 35"><defs><pattern id="hat" width="2.6" height="2.6" patternUnits="userSpaceOnUse" patternTransform="rotate(-45)"><rect width="2.6" height=".8" fill="#3a3a3a"/></pattern></defs><path d="M6,27 V19.4 L13,13.4 H27.4 V27 Z" fill="#fff" stroke="#111" stroke-width="1"/><path d="M6,27 V19.4 L13,13.4 H27.4 V27 Z" fill="url(#hat)"/><circle cx="19.6" cy="21.4" r="3" fill="#fff" stroke="#111" stroke-width="1.2"/><g transform="translate(17.6,17) rotate(-42)"><path d="M0,0 L3.6,-1.9 L15,-1.9 L15,1.9 L3.6,1.9 Z" fill="#e8a23a" stroke="#8a5a10" stroke-width=".6"/><path d="M0,0 L3.6,-1.9 L3.6,1.9Z" fill="#f0dcb0" stroke="#8a5a10" stroke-width=".4"/><rect x="13" y="-1.9" width="2.6" height="3.8" rx=".8" fill="#e02a1a"/></g></svg></div><div class="tb" style="left:1px;top:586px"><svg viewBox="0 0 35 35"><path d="M11,10.6 Q14.6,4.6 19,8.6" stroke="#888" stroke-width="1.1" fill="none"/><g transform="translate(23.4,16.6) rotate(-20)"><rect x="-3.8" y="-9.6" width="7.6" height="19.2" rx="2.4" fill="#d85a5e" stroke="#b84448" stroke-width=".7"/><rect x="-2.2" y="-9" width="2" height="18" fill="#e88a8c" opacity=".8"/></g><path d="M8.6,6.6 l.9,2.4 l2.4,-1.2 l-1.2,2.4 l2.4,.9 l-2.4,.9 l1.2,2.4 l-2.4,-1.2 l-.9,2.4 l-.9,-2.4 l-2.4,1.2 l1.2,-2.4 l-2.4,-.9 l2.4,-.9 l-1.2,-2.4 l2.4,1.2 Z" fill="#e8e060" stroke="#c8b820" stroke-width=".3"/></svg></div><div class="tb" style="left:1px;top:629px"><svg viewBox="0 0 35 35"><rect x="21" y="7.6" width="6.6" height="6.6" fill="#aaa" stroke="#888" stroke-width=".8"/><rect x="6.6" y="19.6" width="6.6" height="6.6" fill="#aaa" stroke="#888" stroke-width=".8"/><rect x="10.4" y="11.6" width="13.4" height="10.4" fill="#f6f2d6" stroke="#777" stroke-width=".9"/></svg></div><div class="tb" style="left:36px;top:629px"><svg viewBox="0 0 35 35"><rect x="10.4" y="11.6" width="13.4" height="10.4" fill="#f6f2d6" stroke="#777" stroke-width=".9"/><rect x="20" y="7.6" width="7.4" height="7.4" fill="#aaa" stroke="#888" stroke-width=".8"/><rect x="6" y="18.6" width="7.4" height="7.4" fill="#aaa" stroke="#888" stroke-width=".8"/></svg></div><div class="tb" style="left:1px;top:672px"><svg viewBox="0 0 35 35"><rect x="7" y="5.4" width="17.6" height="6.6" rx="1.4" fill="#f2d65a" stroke="#a08a30" stroke-width=".8"/><path d="M24.6,8.6 H27.4 V14.6 H16.4 V19" stroke="#888" stroke-width="1" fill="none"/></svg></div></div>
<div id="tabbar"><span style="left:530.5px;top:4.6px;line-height:16px;white-space:nowrap">* offset.dxf</span><svg style="left:22px;top:3px;width:18px;height:18px" viewBox="94 111 18 18"><circle cx="102" cy="118.6" r="5.4" fill="#f4f4f4" stroke="#22306e" stroke-width="1.9"/><path d="M98.4,118.6 h7.2 M102,115 v7.2" stroke="#e8a0a0" stroke-width=".8"/><path d="M102.4,118.8 L107.6,124.6" stroke="#e8a020" stroke-width="2" stroke-linecap="round"/><path d="M106.6,123.6 L108,125.2" stroke="#e06060" stroke-width="2" stroke-linecap="round"/></svg></div><div id="corner"></div><div id="hrext"></div><div id="hruler"><span style="left:0.0px">38</span><i style="left:0.0px"></i><span style="left:22.5px">39</span><i style="left:22.5px"></i><span style="left:45.0px">40</span><i style="left:45.0px"></i><span style="left:67.5px">41</span><i style="left:67.5px"></i><span style="left:90.0px">42</span><i style="left:90.0px"></i><span style="left:112.5px">43</span><i style="left:112.5px"></i><span style="left:135.0px">44</span><i style="left:135.0px"></i><span style="left:157.5px">45</span><i style="left:157.5px"></i><span style="left:180.0px">46</span><i style="left:180.0px"></i><span style="left:202.5px">47</span><i style="left:202.5px"></i><span style="left:225.0px">48</span><i style="left:225.0px"></i><span style="left:247.5px">49</span><i style="left:247.5px"></i><span style="left:270.0px">50</span><i style="left:270.0px"></i><span style="left:292.5px">51</span><i style="left:292.5px"></i><span style="left:315.0px">52</span><i style="left:315.0px"></i><span style="left:337.5px">53</span><i style="left:337.5px"></i><span style="left:360.0px">54</span><i style="left:360.0px"></i><span style="left:382.5px">55</span><i style="left:382.5px"></i><span style="left:405.0px">56</span><i style="left:405.0px"></i><span style="left:427.5px">57</span><i style="left:427.5px"></i><span style="left:450.0px">58</span><i style="left:450.0px"></i><span style="left:472.5px">59</span><i style="left:472.5px"></i><span style="left:495.0px">60</span><i style="left:495.0px"></i><span style="left:517.5px">61</span><i style="left:517.5px"></i><span style="left:540.0px">62</span><i style="left:540.0px"></i><span style="left:562.5px">63</span><i style="left:562.5px"></i><span style="left:585.0px">64</span><i style="left:585.0px"></i><span style="left:607.5px">65</span><i style="left:607.5px"></i><span style="left:630.0px">66</span><i style="left:630.0px"></i><span style="left:652.5px">67</span><i style="left:652.5px"></i><span style="left:675.0px">68</span><i style="left:675.0px"></i><span style="left:697.5px">69</span><i style="left:697.5px"></i><span style="left:720.0px">70</span><i style="left:720.0px"></i><span style="left:742.5px">71</span><i style="left:742.5px"></i><span style="left:765.0px">72</span><i style="left:765.0px"></i><span style="left:787.5px">73</span><i style="left:787.5px"></i><span style="left:810.0px">74</span><i style="left:810.0px"></i><span style="left:832.5px">75</span><i style="left:832.5px"></i><span style="left:855.0px">76</span><i style="left:855.0px"></i><span style="left:877.5px">77</span><i style="left:877.5px"></i><span style="left:900.0px">78</span><i style="left:900.0px"></i><span style="left:922.5px">79</span><i style="left:922.5px"></i><span style="left:945.0px">80</span><i style="left:945.0px"></i><span style="left:967.5px">81</span><i style="left:967.5px"></i><span style="left:990.0px">82</span><i style="left:990.0px"></i><span style="left:1012.5px">83</span><i style="left:1012.5px"></i><span style="left:1035.0px">84</span><i style="left:1035.0px"></i><span style="left:1057.5px">85</span><i style="left:1057.5px"></i></div><div id="vruler"><span style="top:599.5px">-9</span><span style="top:577.0px">-8</span><span style="top:554.5px">-7</span><i style="top:554.0px"></i><span style="top:532.0px">-6</span><i style="top:531.5px"></i><span style="top:509.5px">-5</span><i style="top:509.0px"></i><span style="top:487.0px">-4</span><i style="top:486.5px"></i><span style="top:464.5px">-3</span><i style="top:464.0px"></i><span style="top:442.0px">-2</span><i style="top:441.5px"></i><span style="top:419.5px">-1</span><i style="top:419.0px"></i><span style="top:397.0px">0</span><i style="top:396.5px"></i><span style="top:374.5px">1</span><i style="top:374.0px"></i><span style="top:352.0px">2</span><i style="top:351.5px"></i><span style="top:329.5px">3</span><i style="top:329.0px"></i><span style="top:307.0px">4</span><i style="top:306.5px"></i><span style="top:284.5px">5</span><i style="top:284.0px"></i><span style="top:262.0px">6</span><i style="top:261.5px"></i><span style="top:239.5px">7</span><i style="top:239.0px"></i><span style="top:217.0px">8</span><i style="top:216.5px"></i><span style="top:194.5px">9</span><i style="top:194.0px"></i><span style="top:172.0px">10</span><i style="top:171.5px"></i><span style="top:149.5px">11</span><i style="top:149.0px"></i><span style="top:127.0px">12</span><i style="top:126.5px"></i><span style="top:104.5px">13</span><i style="top:104.0px"></i><span style="top:82.0px">14</span><i style="top:81.5px"></i><span style="top:59.5px">15</span><i style="top:59.0px"></i><span style="top:37.0px">16</span><i style="top:36.5px"></i><span style="top:14.5px">17</span><i style="top:14.0px"></i><span style="top:-8.0px">18</span><i style="top:-8.5px"></i></div><svg style="left:72px;top:132px;width:1070px;height:600px" viewBox="72 132 1070 600"><path d="M600.6,145.2 H612 L606.3,151 Z" fill="#000"/><path d="M85,216.4 V227.6 L90.8,222 Z" fill="#000"/></svg><div id="canvas"><svg style="left:0;top:0;width:1044px;height:577px" viewBox="95 155 1044 577"><defs><pattern id="gd" x="5" y="12" width="45" height="45" patternUnits="userSpaceOnUse"><path d="M0,0h1v1h-1z M22,0h1v1h-1z M0,22h1v1h-1z M22,22h1v1h-1z" fill="#454545"/></pattern></defs><rect x="139.0" y="155" width="2" height="577" fill="#0e0e0e"/><rect x="364.0" y="155" width="2" height="577" fill="#0e0e0e"/><rect x="589.0" y="155" width="2" height="577" fill="#0e0e0e"/><rect x="814.0" y="155" width="2" height="577" fill="#0e0e0e"/><rect x="1039.0" y="155" width="2" height="577" fill="#0e0e0e"/><rect x="95" y="551.0" width="1044" height="2" fill="#0e0e0e"/><rect x="95" y="326.0" width="1044" height="2" fill="#0e0e0e"/><rect x="95" y="155" width="1044" height="577" fill="url(#gd)"/><path d="M275.0,552.0 L365.0,327.0" stroke="#ffffff" stroke-width="1.15" fill="none"/><path d="M285.45,556.18 L375.45,331.18" stroke="#ff0000" stroke-width="1.15" fill="none"/><path d="M500.01,327.05 A145.80,145.80 0 0 0 410.04,551.97" stroke="#ffffff" stroke-width="1.15" fill="none"/><path d="M502.35,338.05 A134.55,134.55 0 0 0 419.32,545.62" stroke="#ff0000" stroke-width="1.15" fill="none"/><circle cx="612.5" cy="439.5" r="112.5" stroke="#ffffff" stroke-width="1.15" fill="none"/><circle cx="612.5" cy="439.5" r="101.25" stroke="#ff0000" stroke-width="1.15" fill="none"/><ellipse cx="815.0" cy="439.5" rx="36.0" ry="112.5" stroke="#ffffff" stroke-width="1.15" fill="none"/><path d="M839.75,439.50 L839.74,436.65 L839.70,433.80 L839.64,430.96 L839.56,428.12 L839.45,425.29 L839.32,422.47 L839.17,419.66 L838.99,416.87 L838.79,414.10 L838.56,411.34 L838.32,408.61 L838.05,405.90 L837.76,403.21 L837.44,400.56 L837.11,397.93 L836.75,395.33 L836.37,392.76 L835.97,390.24 L835.55,387.75 L835.11,385.29 L834.66,382.88 L834.18,380.52 L833.68,378.20 L833.17,375.92 L832.64,373.70 L832.09,371.52 L831.52,369.40 L830.94,367.34 L830.35,365.33 L829.74,363.38 L829.12,361.49 L828.49,359.66 L827.85,357.90 L827.19,356.21 L826.53,354.58 L825.86,353.02 L825.19,351.53 L824.52,350.12 L823.84,348.79 L823.16,347.53 L822.49,346.35 L821.82,345.25 L821.16,344.23 L820.51,343.29 L819.87,342.44 L819.26,341.68 L818.67,341.00 L818.11,340.40 L817.58,339.89 L817.10,339.46 L816.65,339.11 L816.26,338.83 L815.92,338.62 L815.64,338.47 L815.42,338.37 L815.25,338.30 L815.14,338.27 L815.07,338.26 L815.02,338.25 L815.00,338.25 L814.98,338.25 L814.93,338.26 L814.86,338.27 L814.75,338.30 L814.58,338.37 L814.36,338.47 L814.08,338.62 L813.74,338.83 L813.35,339.11 L812.90,339.46 L812.42,339.89 L811.89,340.40 L811.33,341.00 L810.74,341.68 L810.13,342.44 L809.49,343.29 L808.84,344.23 L808.18,345.25 L807.51,346.35 L806.84,347.53 L806.16,348.79 L805.48,350.12 L804.81,351.53 L804.14,353.02 L803.47,354.58 L802.81,356.21 L802.15,357.90 L801.51,359.66 L800.88,361.49 L800.26,363.38 L799.65,365.33 L799.06,367.34 L798.48,369.40 L797.91,371.52 L797.36,373.70 L796.83,375.92 L796.32,378.20 L795.82,380.52 L795.34,382.88 L794.89,385.29 L794.45,387.75 L794.03,390.24 L793.63,392.76 L793.25,395.33 L792.89,397.93 L792.56,400.56 L792.24,403.21 L791.95,405.90 L791.68,408.61 L791.44,411.34 L791.21,414.10 L791.01,416.87 L790.83,419.66 L790.68,422.47 L790.55,425.29 L790.44,428.12 L790.36,430.96 L790.30,433.80 L790.26,436.65 L790.25,439.50 L790.26,442.35 L790.30,445.20 L790.36,448.04 L790.44,450.88 L790.55,453.71 L790.68,456.53 L790.83,459.34 L791.01,462.13 L791.21,464.90 L791.44,467.66 L791.68,470.39 L791.95,473.10 L792.24,475.79 L792.56,478.44 L792.89,481.07 L793.25,483.67 L793.63,486.24 L794.03,488.76 L794.45,491.25 L794.89,493.71 L795.34,496.12 L795.82,498.48 L796.32,500.80 L796.83,503.08 L797.36,505.30 L797.91,507.48 L798.48,509.60 L799.06,511.66 L799.65,513.67 L800.26,515.62 L800.88,517.51 L801.51,519.34 L802.15,521.10 L802.81,522.79 L803.47,524.42 L804.14,525.98 L804.81,527.47 L805.48,528.88 L806.16,530.21 L806.84,531.47 L807.51,532.65 L808.18,533.75 L808.84,534.77 L809.49,535.71 L810.13,536.56 L810.74,537.32 L811.33,538.00 L811.89,538.60 L812.42,539.11 L812.90,539.54 L813.35,539.89 L813.74,540.17 L814.08,540.38 L814.36,540.53 L814.58,540.63 L814.75,540.70 L814.86,540.73 L814.93,540.74 L814.98,540.75 L815.00,540.75 L815.02,540.75 L815.07,540.74 L815.14,540.73 L815.25,540.70 L815.42,540.63 L815.64,540.53 L815.92,540.38 L816.26,540.17 L816.65,539.89 L817.10,539.54 L817.58,539.11 L818.11,538.60 L818.67,538.00 L819.26,537.32 L819.87,536.56 L820.51,535.71 L821.16,534.77 L821.82,533.75 L822.49,532.65 L823.16,531.47 L823.84,530.21 L824.52,528.88 L825.19,527.47 L825.86,525.98 L826.53,524.42 L827.19,522.79 L827.85,521.10 L828.49,519.34 L829.12,517.51 L829.74,515.62 L830.35,513.67 L830.94,511.66 L831.52,509.60 L832.09,507.48 L832.64,505.30 L833.17,503.08 L833.68,500.80 L834.18,498.48 L834.66,496.12 L835.11,493.71 L835.55,491.25 L835.97,488.76 L836.37,486.24 L836.75,483.67 L837.11,481.07 L837.44,478.44 L837.76,475.79 L838.05,473.10 L838.32,470.39 L838.56,467.66 L838.79,464.90 L838.99,462.13 L839.17,459.34 L839.32,456.53 L839.45,453.71 L839.56,450.88 L839.64,448.04 L839.70,445.20 L839.74,442.35 L839.75,439.50Z" stroke="#ff0000" stroke-width="1.15" fill="none" stroke-linejoin="round"/><path d="M995.00,327.00 C906.35,403.73 1017.05,511.95 905.00,552.00" stroke="#ffffff" stroke-width="1.15" fill="none"/><path d="M1002.36,335.51 L999.41,338.15 L996.64,340.80 L994.04,343.47 L991.61,346.15 L989.33,348.84 L987.22,351.53 L985.24,354.25 L983.41,356.97 L981.72,359.70 L980.15,362.45 L978.70,365.21 L977.37,367.99 L976.15,370.78 L975.04,373.60 L974.04,376.42 L973.12,379.27 L972.31,382.14 L971.58,385.03 L970.93,387.94 L970.37,390.86 L969.89,393.81 L969.47,396.78 L969.13,399.77 L968.86,402.78 L968.64,405.80 L968.49,408.84 L968.38,411.90 L968.33,414.97 L968.32,418.05 L968.36,421.15 L968.43,424.26 L968.54,427.38 L968.67,430.51 L968.83,433.64 L969.00,436.79 L969.19,439.93 L969.39,443.08 L969.60,446.24 L969.80,449.40 L970.00,452.56 L970.19,455.72 L970.37,458.87 L970.52,462.03 L970.65,465.19 L970.75,468.35 L970.81,471.50 L970.83,474.65 L970.80,477.79 L970.72,480.93 L970.57,484.07 L970.36,487.20 L970.08,490.33 L969.71,493.44 L969.26,496.55 L968.72,499.65 L968.07,502.74 L967.31,505.81 L966.44,508.86 L965.44,511.89 L964.32,514.90 L963.06,517.88 L961.65,520.82 L960.10,523.72 L958.40,526.58 L956.54,529.38 L954.53,532.12 L952.35,534.80 L950.01,537.41 L947.51,539.95 L944.84,542.42 L942.01,544.80 L939.02,547.11 L935.85,549.33 L932.51,551.47 L929.01,553.53 L925.33,555.50 L921.47,557.40 L917.43,559.21 L913.20,560.94 L908.79,562.59" stroke="#ff0000" stroke-width="1.15" fill="none"/></svg></div>
<div id="vscroll"><div style="left:4px;top:130px;width:8px;height:316px;border-radius:4px;background:#7d7d7d"></div></div><div id="hscroll"><div style="left:147.5px;top:4px;width:681px;height:8px;border-radius:4px;background:#7d7d7d"></div></div><div id="zoomlab">1 &lt; 10</div>
<div id="layers"><div id="ltitle"><span style="left:143.2px;top:0;white-space:nowrap">Layerliste</span></div><div class="lb" style="left:1px;width:60px"></div><div class="lb" style="left:61px;width:60px"></div><div class="lb" style="left:121px;width:60px"></div><div class="lb" style="left:181px;width:60px"></div><div class="lb" style="left:241px;width:60px"></div><svg style="left:0;top:0;width:301px;height:100px" viewBox="1154 108 301 100"><circle cx="1164" cy="118" r="6.7" fill="#5e5e5e"/><path d="M1161,115 l6,6 M1167,115 l-6,6" stroke="#f2f2f2" stroke-width="2" stroke-linecap="round"/><circle cx="1182" cy="118" r="6.7" fill="#5e5e5e"/><rect x="1180.4" y="114.8" width="5" height="4.2" rx=".8" fill="none" stroke="#f2f2f2" stroke-width="1.1"/><rect x="1178.4" y="117" width="5" height="4.2" rx=".8" fill="#5e5e5e" stroke="#f2f2f2" stroke-width="1.1"/><g transform="translate(1185,142.7)"><path d="M-7.6,.2 Q-4,-5.6 .2,-5.6 Q4.8,-5.6 7.6,.2 Q6,2.8 4.6,3.4 Q2.4,5.4 -0.4,5.4 Q-3.4,5.4 -5.2,3.4 Q-6.6,2.2 -7.6,.2 Z" fill="#000"/><path d="M-4.6,1.2 Q-2.4,-1.9 .3,-1.9 Q3,-1.9 4.7,1 Q2.8,3.9 .2,3.9 Q-2.8,3.9 -4.6,1.2 Z" fill="#fff"/><circle cx=".2" cy=".5" r="2.5" fill="#000"/><circle cx="-.7" cy="-.5" r=".7" fill="#fff"/></g><g transform="translate(1245,142.7)"><path d="M-7.6,.2 Q-4,-5.6 .2,-5.6 Q4.8,-5.6 7.6,.2 Q6,2.8 4.6,3.4 Q2.4,5.4 -0.4,5.4 Q-3.4,5.4 -5.2,3.4 Q-6.6,2.2 -7.6,.2 Z" fill="#a4a4a4"/><path d="M-4.6,1.2 Q-2.4,-1.9 .3,-1.9 Q3,-1.9 4.7,1 Q2.8,3.9 .2,3.9 Q-2.8,3.9 -4.6,1.2 Z" fill="#fff"/><circle cx=".2" cy=".5" r="2.5" fill="#a4a4a4"/><circle cx="-.7" cy="-.5" r=".7" fill="#fff"/></g><path d="M1298.6,143.2 h12 M1304.6,137.2 v12" stroke="#8a2020" stroke-width="3.6"/><path d="M1299.2,143.2 h10.8 M1304.6,137.8 v10.8" stroke="#ff0000" stroke-width="2.4"/><rect x="1358.6" y="141.2" width="12.4" height="3.8" fill="#ff0000" stroke="#8a3030" stroke-width=".7"/><g transform="translate(1418.4,149.4) rotate(-44)"><path d="M0,0 L3.4,-1.8 L18,-1.8 L18,1.8 L3.4,1.8 Z" fill="#e2a030" stroke="#8a5a14" stroke-width=".5" stroke-linejoin="round"/><path d="M3.6,-.4 L15,-.4" stroke="#f4c468" stroke-width=".8"/><path d="M0,0 L3.4,-1.8 L3.4,1.8 Z" fill="#d8b070" stroke="#8a5a14" stroke-width=".4"/><path d="M0,0 L1.4,-.7 L1.4,.7Z" fill="#444"/><rect x="15.2" y="-1.8" width="3.2" height="3.6" rx=".7" fill="#e02a20"/></g><rect x="1161.5" y="163.5" width="15.4" height="8.4" fill="#fff" stroke="#000" stroke-width="1"/><rect x="1161.5" y="183.5" width="15.4" height="8.4" fill="#ff0000" stroke="#000" stroke-width="1"/><g transform="translate(1423.2,166.8)"><path d="M-7.6,.2 Q-4,-5.6 .2,-5.6 Q4.8,-5.6 7.6,.2 Q6,2.8 4.6,3.4 Q2.4,5.4 -0.4,5.4 Q-3.4,5.4 -5.2,3.4 Q-6.6,2.2 -7.6,.2 Z" fill="#000"/><path d="M-4.6,1.2 Q-2.4,-1.9 .3,-1.9 Q3,-1.9 4.7,1 Q2.8,3.9 .2,3.9 Q-2.8,3.9 -4.6,1.2 Z" fill="#fff"/><circle cx=".2" cy=".5" r="2.5" fill="#000"/><circle cx="-.7" cy="-.5" r=".7" fill="#fff"/></g><g transform="translate(1423.2,186.8)"><path d="M-7.6,.2 Q-4,-5.6 .2,-5.6 Q4.8,-5.6 7.6,.2 Q6,2.8 4.6,3.4 Q2.4,5.4 -0.4,5.4 Q-3.4,5.4 -5.2,3.4 Q-6.6,2.2 -7.6,.2 Z" fill="#000"/><path d="M-4.6,1.2 Q-2.4,-1.9 .3,-1.9 Q3,-1.9 4.7,1 Q2.8,3.9 .2,3.9 Q-2.8,3.9 -4.6,1.2 Z" fill="#fff"/><circle cx=".2" cy=".5" r="2.5" fill="#000"/><circle cx="-.7" cy="-.5" r=".7" fill="#fff"/></g><g transform="translate(1440.2,160)"><path d="M1.8,6.4 V4.2 A3.2,3.6 0 0 1 8.2,4.2 V6.4" fill="none" stroke="#b4b4b4" stroke-width="1.3"/><rect x="0" y="6.2" width="10" height="7.6" fill="#b4b4b4"/></g><g transform="translate(1440.2,180)"><path d="M1.8,6.4 V4.2 A3.2,3.6 0 0 1 8.2,4.2 V6.4" fill="none" stroke="#b4b4b4" stroke-width="1.3"/><rect x="0" y="6.2" width="10" height="7.6" fill="#b4b4b4"/></g><g transform="translate(1394.6,193) rotate(-44)"><path d="M0,0 L3.4,-1.7 L17.6,-1.7 L17.6,1.7 L3.4,1.7 Z" fill="#e2a030" stroke="#8a5a14" stroke-width=".5" stroke-linejoin="round"/><path d="M3.6,-.4 L14.600000000000001,-.4" stroke="#f4c468" stroke-width=".8"/><path d="M0,0 L3.4,-1.7 L3.4,1.7 Z" fill="#d8b070" stroke="#8a5a14" stroke-width=".4"/><path d="M0,0 L1.4,-.7 L1.4,.7Z" fill="#444"/><rect x="14.8" y="-1.7" width="3.2" height="3.4" rx=".7" fill="#e02a20"/></g></svg><span style="left:29.3px;top:51.8px;font-size:13.2px;line-height:16px">0</span><span style="left:29.3px;top:71.8px;font-size:13.2px;line-height:16px;white-space:nowrap">Versatz</span></div>
<div id="right"><div class="hdlh" style="left:8px;top:8px;width:27px"></div><div class="pressed" style="left:1px;top:12px;width:44px;height:43px"></div><div class="pressed" style="left:1px;top:309px;width:44px;height:43px"></div><div style="left:0;top:153px;width:45px;height:1px;background:repeating-linear-gradient(90deg,#777 0,#777 1px,transparent 1px,transparent 3px)"></div><div style="left:0;top:301px;width:45px;height:1px;background:repeating-linear-gradient(90deg,#777 0,#777 1px,transparent 1px,transparent 3px)"></div><svg style="left:0;top:0;width:45px;height:420px" viewBox="1455 108 45 420"><g transform="translate(1463.4,127.3)"><rect x=".5" y=".5" width="27" height="27" fill="#fff" stroke="#000" stroke-width="1"/><rect x="0" y="0" width="28" height="4.6" fill="#000"/><rect x="1" y="1" width="3" height="3" fill="#fff"/><path d="M7.6,12.6 L15.4,9.6 V20.4 L7.6,23.4 Z" fill="#ccc" stroke="#666" stroke-width=".6"/><path d="M9.6,12 L17.4,9 V19.8 L9.6,22.8 Z" fill="#ddd" stroke="#666" stroke-width=".6"/><path d="M12,11.4 L20.4,8.4 V19 L12,22 Z" fill="#fff" stroke="#555" stroke-width=".7"/><path d="M14,19.6 L18.6,11.6 L18.6,17.8 Z" fill="none" stroke="#ff4a4a" stroke-width=".8"/></g><g transform="translate(1463.4,174.3)"><rect x=".5" y=".5" width="27" height="27" fill="#fff" stroke="#000" stroke-width="1"/><rect x="0" y="0" width="28" height="4.6" fill="#000"/><rect x="1" y="1" width="3" height="3" fill="#fff"/><rect x="7" y="10.4" width="10.6" height="8" fill="#f6f0cc" stroke="#8a8a6a" stroke-width=".7"/><circle cx="17" cy="17.6" r="4.2" fill="#f6f0cc" fill-opacity=".85" stroke="#8a8a6a" stroke-width=".7"/></g><g transform="translate(1463.4,220.5)"><rect x=".5" y=".5" width="27" height="27" fill="#fff" stroke="#000" stroke-width="1"/><rect x="0" y="0" width="28" height="4.6" fill="#000"/><rect x="1" y="1" width="3" height="3" fill="#fff"/><rect x="5.4" y="10" width="17" height="11" rx="2" fill="#f4f2ec" stroke="#b4c4e8" stroke-width="1"/></g><g transform="translate(1463.4,276)"><rect x=".5" y=".5" width="27" height="27" fill="#fff" stroke="#000" stroke-width="1"/><rect x="0" y="0" width="28" height="4.6" fill="#000"/><rect x="1" y="1" width="3" height="3" fill="#fff"/><rect x="3.4" y="8.6" width="3.4" height="2.8" fill="#000"/><rect x="3.4" y="14" width="3.4" height="2.8" fill="#000"/><rect x="3.4" y="19.4" width="3.4" height="2.8" fill="#000"/><rect x="9.4" y="8.6" width="14" height="2.8" fill="#fff" stroke="#444" stroke-width=".7"/><rect x="9.4" y="14" width="14" height="2.8" fill="#fff" stroke="#444" stroke-width=".7"/><rect x="9.4" y="19.4" width="14" height="2.8" fill="#fff" stroke="#444" stroke-width=".7"/></g><g transform="translate(1463.4,322.5)"><rect x=".5" y=".5" width="27" height="27" fill="#fff" stroke="#000" stroke-width="1"/><rect x="0" y="0" width="28" height="4.6" fill="#000"/><rect x="1" y="1" width="3" height="3" fill="#fff"/><path d="M7.4,9.4 H20.6 L15.4,15.4 V23 L12.6,21.4 V15.4 Z" fill="#8c8c8c" stroke="#5a5a5a" stroke-width=".7"/></g><g transform="translate(1463.4,368.2)"><rect x=".5" y=".5" width="27" height="27" fill="#fff" stroke="#000" stroke-width="1"/><rect x="0" y="0" width="28" height="4.6" fill="#000"/><rect x="1" y="1" width="3" height="3" fill="#fff"/><path d="M6.4,9.6 V22.6 M6.4,12 L11.4,13.6 V18.6 L6.4,20.2" stroke="#555" stroke-width=".8" fill="none"/><rect x="11.4" y="13.4" width="10" height="5.6" fill="#999" stroke="#555" stroke-width=".6"/><path d="M4.6,16.2 H24" stroke="#ff6a6a" stroke-width=".6" stroke-dasharray="2,1"/></g><g transform="translate(1463.4,424.4)"><rect x=".5" y=".5" width="27" height="27" fill="#fff" stroke="#000" stroke-width="1"/><rect x="0" y="0" width="28" height="4.6" fill="#000"/><rect x="1" y="1" width="3" height="3" fill="#fff"/><path d="M3.4,9 h12 M3.4,11.6 h10 M3.4,14.2 h13 M3.4,16.8 h11 M3.4,19.4 h12" stroke="#999" stroke-width=".9"/><path d="M1,22 H27" stroke="#000" stroke-width=".8"/><path d="M3,25 h3 M9,25 h15" stroke="#666" stroke-width="1"/></g><g transform="translate(1463.4,471)"><rect x=".5" y=".5" width="27" height="27" fill="#fff" stroke="#000" stroke-width="1"/><rect x="0" y="0" width="28" height="4.6" fill="#000"/><rect x="1" y="1" width="3" height="3" fill="#fff"/><rect x="8.6" y="9.4" width="11.4" height="14" rx="1" fill="#c8913c" stroke="#8a5a1a" stroke-width=".7"/><rect x="10.2" y="11.6" width="8.2" height="10.4" fill="#f4f4f0"/><rect x="11.6" y="8.2" width="5.4" height="3" rx=".6" fill="#8a8a84"/><path d="M11.4,14.4 h5.6 M11.4,16.4 h5.6 M11.4,18.4 h4" stroke="#aaa" stroke-width=".7"/></g></svg></div>
<div id="hist"><span style="left:5.4px;top:0;white-space:nowrap"><i>Kommando: </i>offset</span></div><div style="left:1141px;top:750px;width:12px;height:20px;background:#fafafa"></div><div style="left:1142.5px;top:751px;width:8px;height:16px;border-radius:4px;background:#7d7d7d"></div><div id="cmd"><span style="left:1.4px;top:6.8px;line-height:16px;white-space:nowrap">Linie, Bogen, Kreis, Ellipse, Spline oder Polylinie wählen:</span><div style="left:336px;top:5px;width:719px;height:18.5px;background:#fff"></div><div style="left:1055.4px;top:1px;width:25.6px;height:25.4px;border:1px solid #a8a8a8;background:linear-gradient(#fafafa,#e6e6e6)"></div><svg style="left:1055px;top:0;width:27px;height:28px" viewBox="1127 771 27 28"><rect x="1133.5" y="780.5" width="13" height="9" fill="#f2f2f2" stroke="#555" stroke-width="1"/><rect x="1133" y="780" width="14" height="3" fill="#000"/></svg></div><div style="left:1154px;top:108px;width:2px;height:691px;background:linear-gradient(90deg,#c4c4c4,#ececec)"></div><div id="status"><span style="left:2.4px;top:9.4px;line-height:12px">60.7111,14.6667</span><span style="left:2.4px;top:29.4px;line-height:12px">@60.7111,14.6667</span><div style="left:253.4px;top:4px;width:1px;height:39px;background:#8a8a8a"></div><span style="left:256.4px;top:9.4px;line-height:12px">62.4576&lt;14°</span><span style="left:256.4px;top:29.4px;line-height:12px">@62.4576&lt;14°</span><div class="dot" style="left:507px;top:21.4px"></div><div class="dot" style="left:940.4px;top:21.4px"></div><div class="dot" style="left:1270px;top:21.4px"></div><span style="left:400px;width:298.6px;top:13px;line-height:11.4px;text-align:right;white-space:nowrap">Linie, Bogen, Kreis, Ellipse, Spline oder<br>Polylinie wählen</span><span style="left:754px;top:18.6px;line-height:12px;">Abbrechen</span><span style="left:949px;top:18.6px;line-height:12px;letter-spacing:.38px">Keine Objekte selektiert.</span><svg style="left:715px;top:5px;width:24px;height:34px" viewBox="715 803 24 34"><rect x="718.4" y="805.6" width="16" height="29" rx="7.6" fill="#fff" stroke="#444" stroke-width=".9"/><path d="M718.4,817.4 H734.4 M726.4,805.6 V817.4" stroke="#222" stroke-width=".9"/><rect x="725" y="808.4" width="2.8" height="6" rx="1.4" fill="#fff" stroke="#222" stroke-width=".8"/></svg></div>
<svg style="left:280px;top:40px;width:130px;height:100px" viewBox="280 40 130 100"><defs><linearGradient id="fh" x1="0" y1="0" x2="1" y2="0"><stop offset="0" stop-color="#ff2020" stop-opacity="0"/><stop offset=".12" stop-color="#ff2020" stop-opacity=".55"/><stop offset=".88" stop-color="#ff2020" stop-opacity=".55"/><stop offset="1" stop-color="#ff2020" stop-opacity="0"/></linearGradient><linearGradient id="fv" x1="0" y1="0" x2="0" y2="1"><stop offset="0" stop-color="#ff2020" stop-opacity="0"/><stop offset=".2" stop-color="#ff2020" stop-opacity=".55"/><stop offset=".8" stop-color="#ff2020" stop-opacity=".55"/><stop offset="1" stop-color="#ff2020" stop-opacity="0"/></linearGradient><radialGradient id="rip" cx="344.8" cy="87.9" r="39" gradientUnits="userSpaceOnUse"><stop offset="0" stop-color="#ffffff" stop-opacity=".2"/><stop offset=".8" stop-color="#f4f6f8" stop-opacity=".26"/><stop offset=".86" stop-color="#8ea6c0" stop-opacity=".3"/><stop offset=".92" stop-color="#8ea6c0" stop-opacity=".36"/><stop offset=".975" stop-color="#8ea6c0" stop-opacity=".3"/><stop offset="1" stop-color="#8ea6c0" stop-opacity="0"/></radialGradient></defs><rect x="306" y="78" width="78" height="20" fill="#ff0000" fill-opacity=".16"/><rect x="296" y="77" width="97" height="2" fill="url(#fh)"/><rect x="296" y="97" width="97" height="2" fill="url(#fh)"/><rect x="305" y="69" width="2" height="38" fill="url(#fv)"/><rect x="383" y="69" width="2" height="38" fill="url(#fv)"/><circle cx="344.8" cy="87.9" r="39" fill="url(#rip)"/><path d="M345.2,87.6 L345.2,109.2 L350,104.8 L354,114 L357.6,112.4 L353.6,103.4 L360.2,103 Z" fill="#fff" stroke="#111" stroke-width="1.2" stroke-linejoin="round"/></svg>
</body></html>
